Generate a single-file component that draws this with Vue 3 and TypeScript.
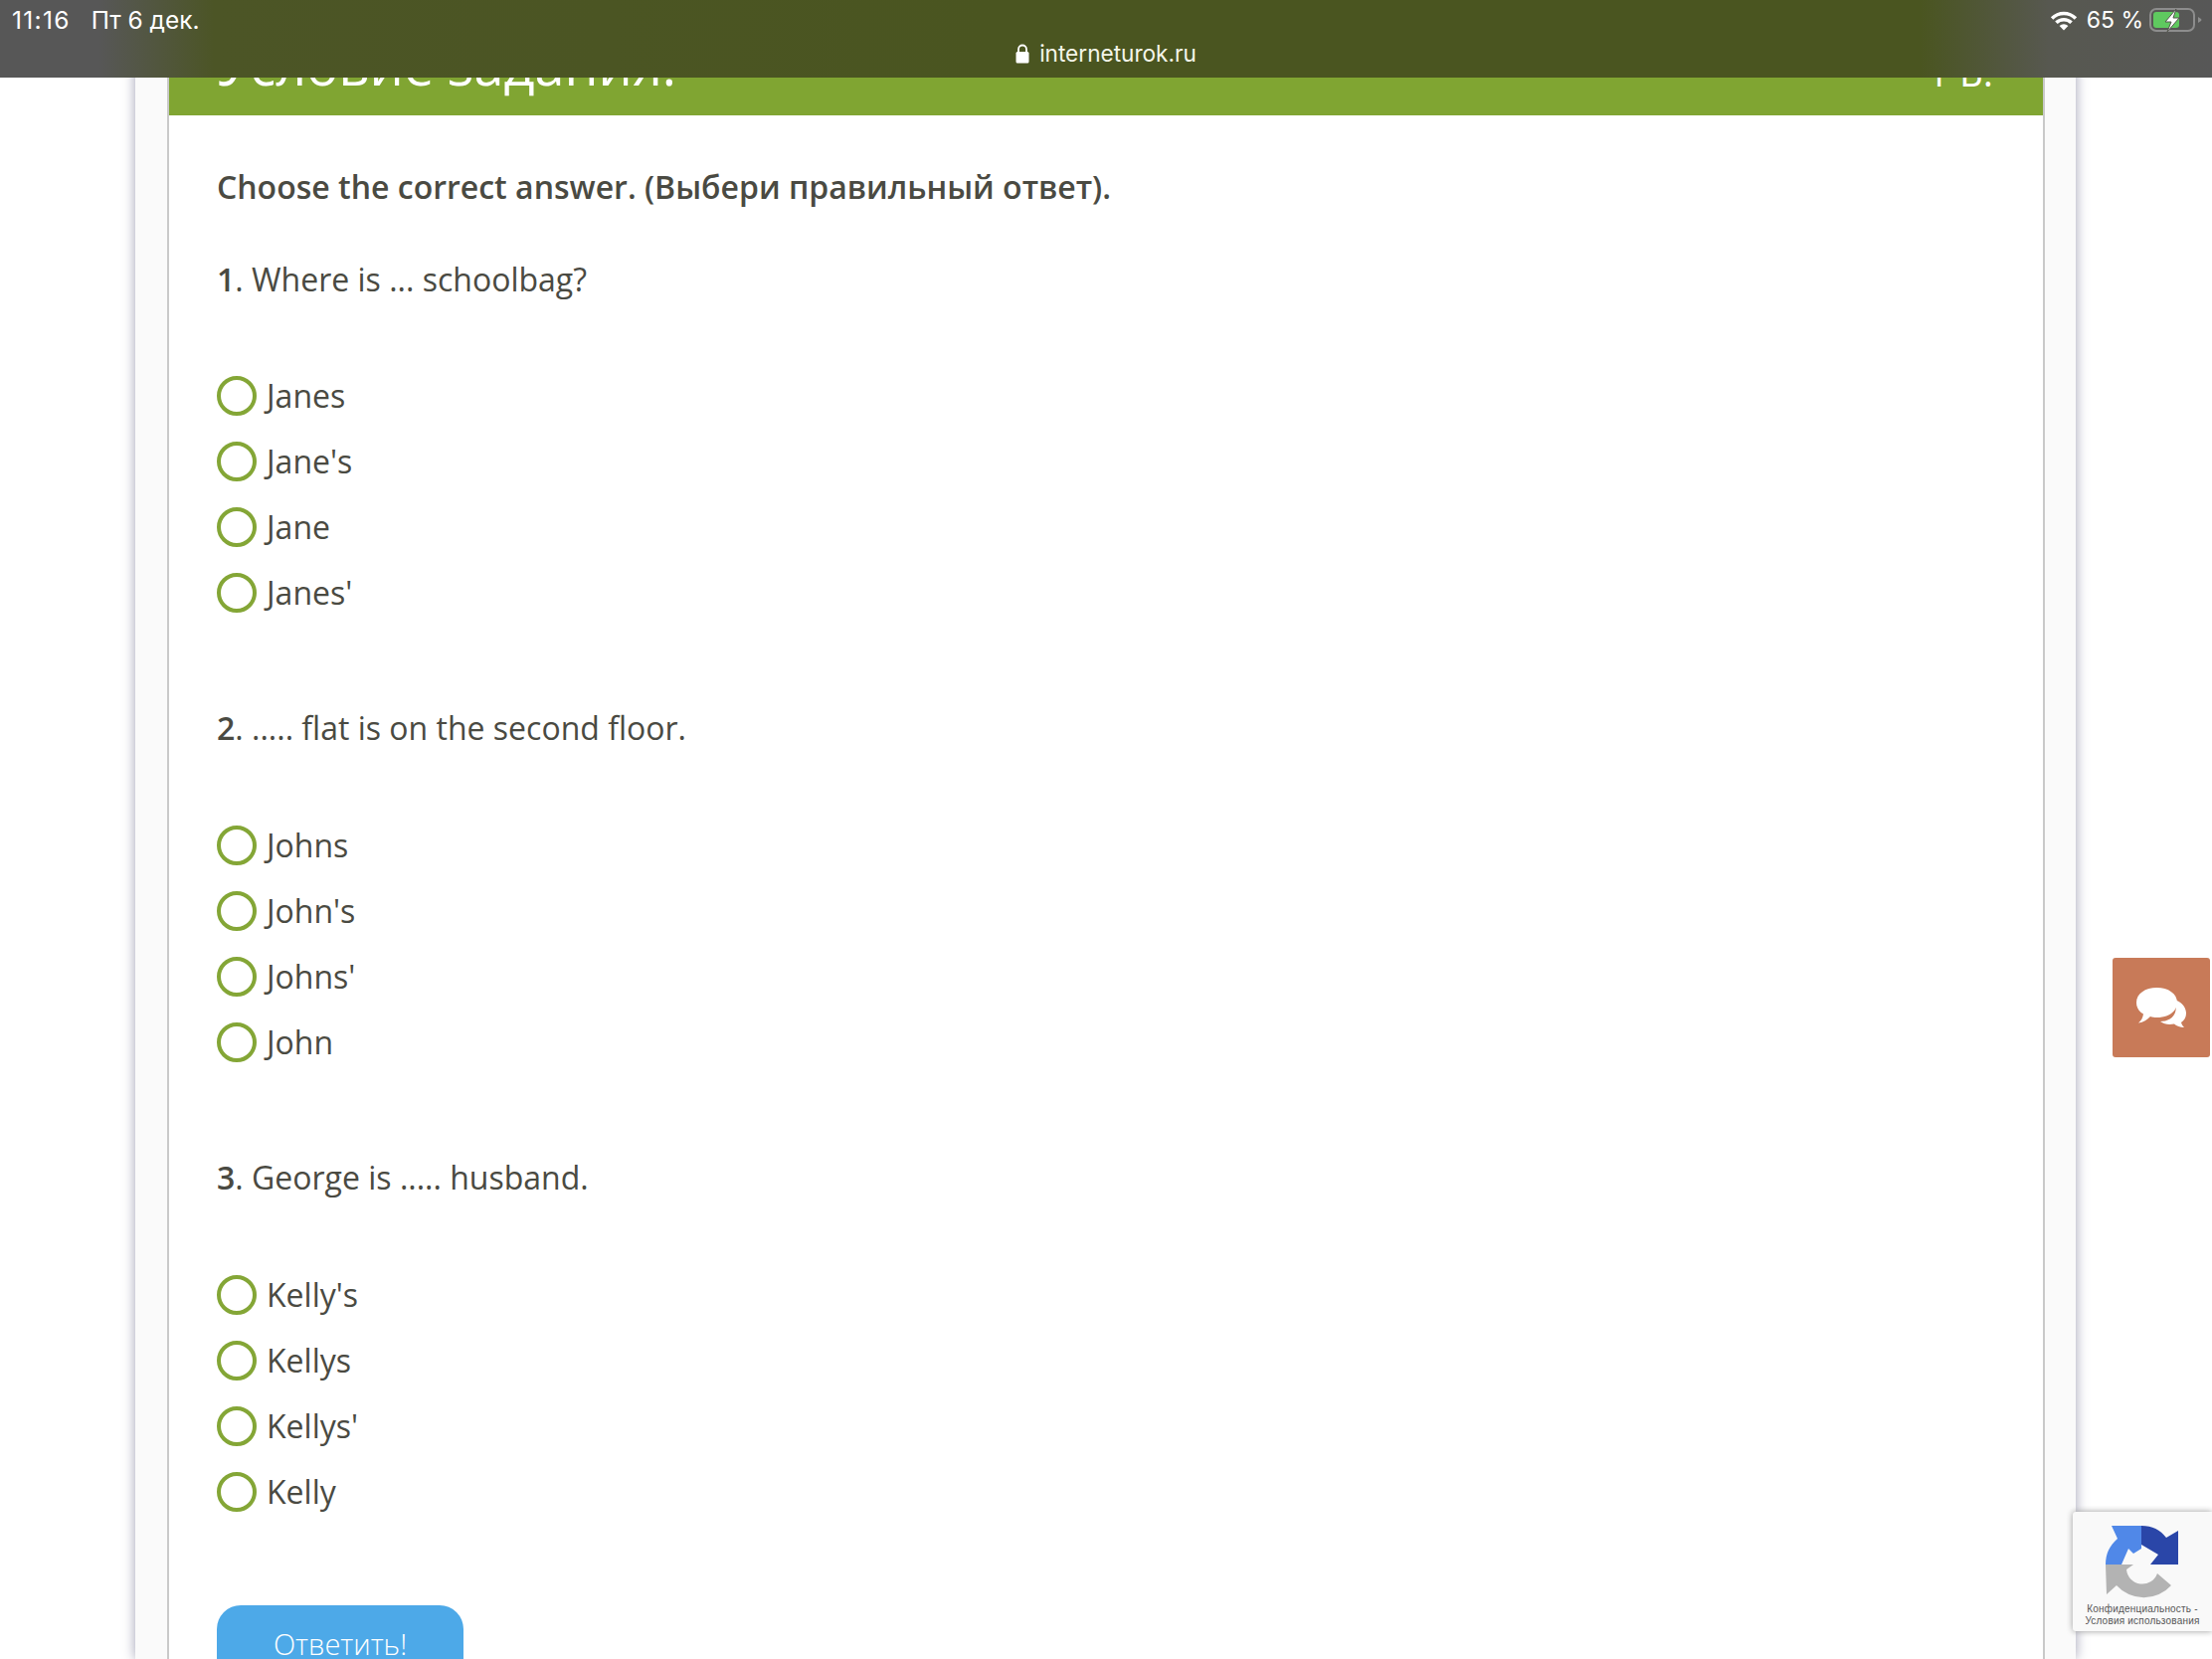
<script setup lang="ts">
interface Question {
  num: string
  text: string
  options: string[]
}

const questions: Question[] = [
  { num: '1', text: 'Where is ... schoolbag?', options: ['Janes', "Jane's", 'Jane', "Janes'"] },
  { num: '2', text: '..... flat is on the second floor.', options: ['Johns', "John's", "Johns'", 'John'] },
  { num: '3', text: 'George is ..... husband.', options: ["Kelly's", 'Kellys', "Kellys'", 'Kelly'] }
]
</script>

<template>
  <div class="screen">
    <main class="panel">
      <section class="card">
        <header class="card-head">
          <span class="head-title">Условие задания:</span>
          <span class="head-score">1 Б.</span>
        </header>
        <div class="card-body">
          <p class="task">Choose the correct answer. (Выбери правильный ответ).</p>
          <div v-for="q in questions" :key="q.num" class="question">
            <p class="q-text"><b class="q-num">{{ q.num }}</b>. {{ q.text }}</p>
            <div class="options">
              <div v-for="opt in q.options" :key="opt" class="option">
                <span class="radio"></span>
                <span class="opt-label">{{ opt }}</span>
              </div>
            </div>
          </div>
          <div class="answer">Ответить!</div>
        </div>
      </section>
    </main>

    <div class="statusbar">
      <div class="status-row">
        <div class="status-left">
          <span class="clock">11:16</span>
          <span>Пт 6 дек.</span>
        </div>
        <div class="status-right">
          <svg class="wifi" viewBox="0 0 26 20" width="28" height="21">
            <path d="M0.5 6.8 A18 18 0 0 1 25.5 6.8 L23.2 9.2 A14.6 14.6 0 0 0 2.8 9.2 Z" fill="#fff" />
            <path d="M4.6 11 A12.2 12.2 0 0 1 21.4 11 L19 13.4 A8.8 8.8 0 0 0 7 13.4 Z" fill="#fff" />
            <path d="M8.8 15.2 A6.2 6.2 0 0 1 17.2 15.2 L13 19.6 Z" fill="#fff" />
          </svg>
          <span class="pct">65 %</span>
          <svg class="battery" viewBox="0 0 53 24" width="53" height="24">
            <rect x="1" y="1" width="44" height="22" rx="6" fill="none" stroke="#8d8d8d" stroke-width="2" />
            <rect x="4" y="4" width="26" height="16" rx="3" fill="#5fc95f" />
            <path d="M49 9 L52 11 Q53 12 52 13 L49 15 Z" fill="#8d8d8d" />
            <path d="M27 1 L16 14 L22 14 L18 24 L30 10 L24 10 Z" fill="#fff" stroke="#55584f" stroke-width="1" />
          </svg>
        </div>
      </div>
      <div class="url">
        <svg class="lock" viewBox="0 0 14 20" width="14" height="20">
          <path d="M3 9 V5.5 A4 4 0 0 1 11 5.5 V9" fill="none" stroke="#fff" stroke-width="1.8" />
          <rect x="0.5" y="8" width="13" height="11.5" rx="1.5" fill="#fff" />
        </svg>
        <span>interneturok.ru</span>
      </div>
    </div>

    <button class="chat" type="button" aria-label="Чат">
      <svg viewBox="0 0 50 40" width="50" height="40">
        <path d="M38 12 C44 14 50 18 50 26 C50 30 48 33 45 35 C45.5 37 47 39 48 40 C44 40 40.5 38.5 38 36.5 C33 37.5 28 37 24 34 C33 34 44 28 38 12 Z" fill="#fff" />
        <path d="M20.5 0 C32 0 41 6 41 15 C41 24 32 30 20.5 30 C18 30 16 29.8 14 29 C11 32 7 35 2 35.5 C5 33 6.5 30 7 26.5 C2.5 24 0 20 0 15 C0 6 9 0 20.5 0 Z" fill="#fff" />
      </svg>
    </button>

    <aside class="recaptcha">
      <svg class="rc-logo" viewBox="0 0 76 76" width="76" height="76">
        <g transform="translate(-16 -7)">
          <path d="M17 47 H45 L38 52 A16 16 0 0 0 69 56 L83 68 A37 37 0 0 1 28 68 L18 77 Z" fill="#b3b3b3" />
          <path d="M23 8 H53 V31 L45 36 L40 31 L33 47 H17 C17 36 21 28 29 21 Z" fill="#5088e8" />
          <path d="M53 8 C64 8 72 12 78 20 L90 13 V47 H62 L70 37 L53 27 Z" fill="#2a46a8" />
        </g>
      </svg>
      <div class="rc-text">Конфиденциальность -<br />Условия использования</div>
    </aside>
  </div>
</template>

<style scoped>
.screen {
  position: relative;
  width: 2224px;
  height: 1668px;
  overflow: hidden;
  background: #ffffff;
  font-family: "Open Sans", "Noto Sans", sans-serif;
  color: #4a4a42;
}
.panel {
  width: 1951px;
  height: 100%;
  margin-left: 136px;
  padding: 0 31px 0 32px;
  box-sizing: border-box;
  background: #fafafa;
  box-shadow: 0 0 12px #a0a0b4;
}
.card {
  height: 100%;
  background: #fff;
  border-left: 2px solid #c9c9c9;
  border-right: 2px solid #c9c9c9;
}
.card-head {
  height: 116px;
  box-sizing: border-box;
  background: #80a532;
  color: #fff;
  padding: 0 50px 0 48px;
  display: flex;
  justify-content: space-between;
  align-items: flex-end;
}
.head-title {
  font-size: 54px;
  line-height: 62px;
  margin-bottom: 20px;
}
.head-score {
  font-size: 39px;
  line-height: 62px;
  margin-bottom: 13px;
}
.card-body {
  padding: 48px 48px 0;
}
.task {
  margin: 0 0 45px;
  font-size: 32px;
  line-height: 48px;
  font-weight: 600;
}
.question {
  margin-bottom: 80px;
}
.q-text {
  margin: 0 0 60px;
  font-size: 32px;
  line-height: 48px;
}
.question + .question .q-text {
  margin-top: -1px;
  margin-bottom: 61px;
}
.q-num {
  font-weight: 600;
}
.option {
  height: 66px;
  display: flex;
  align-items: center;
  gap: 10px;
  font-size: 32px;
}
.opt-label {
  margin-top: -2px;
}
.radio {
  width: 40px;
  height: 40px;
  box-sizing: border-box;
  border: 4px solid #84a636;
  border-radius: 50%;
  background: #fff;
}
.answer {
  margin-top: 81px;
  width: 248px;
  height: 120px;
  box-sizing: border-box;
  padding-top: 18px;
  background: #4da9e8;
  border-radius: 24px;
  color: #fff;
  text-align: center;
  font-size: 29px;
  line-height: 42px;
  font-weight: 300;
}
.statusbar {
  position: absolute;
  left: 0;
  top: 0;
  width: 100%;
  height: 78px;
  background: linear-gradient(90deg, #575757 0, #575757 100px, #4c5526 215px, #4a5520 1000px, #4a5520 1930px, #575850 2060px, #575757 2224px);
  color: #fff;
  font-family: Inter, "Liberation Sans", sans-serif;
}
.status-row {
  height: 40px;
  padding: 0 10px 0 12px;
  display: flex;
  justify-content: space-between;
  align-items: center;
  font-size: 23px;
}
.status-left {
  display: flex;
  gap: 21px;
  font-size: 24.5px;
}
.clock {
  letter-spacing: 1.3px;
}
.status-right {
  display: flex;
  align-items: center;
}
.wifi {
  margin-right: 9px;
}
.pct {
  margin-right: 6px;
}
.url {
  display: flex;
  justify-content: center;
  align-items: center;
  gap: 10px;
  font-size: 22.6px;
  line-height: 26px;
  margin-top: 1px;
  color: #f4f6ea;
}
.chat {
  position: absolute;
  left: 2124px;
  top: 963px;
  width: 98px;
  height: 100px;
  border: 0;
  padding: 0;
  border-radius: 3px;
  background: #c87a58;
  display: flex;
  align-items: center;
  justify-content: center;
}
.recaptcha {
  position: absolute;
  left: 2084px;
  top: 1520px;
  width: 140px;
  height: 120px;
  box-sizing: border-box;
  background: #f9f9f9;
  border-radius: 3px 0 0 3px;
  box-shadow: 0 0 6px #9a9a9a;
  padding-top: 13px;
}
.rc-logo {
  display: block;
  margin-left: 32px;
}
.rc-text {
  margin-top: 3px;
  text-align: center;
  font-family: "Liberation Sans", sans-serif;
  font-size: 10px;
  line-height: 12px;
  color: #555;
  letter-spacing: 0.2px;
  white-space: nowrap;
}
</style>

<style>
html, body {
  margin: 0;
  overflow: hidden;
}
</style>
